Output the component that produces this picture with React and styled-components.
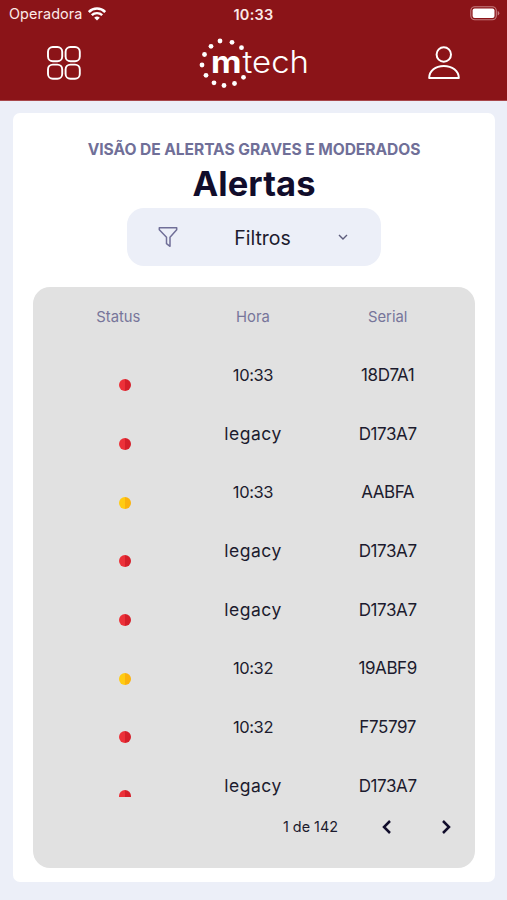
import React from 'react';
import styled, { createGlobalStyle } from 'styled-components';

const GlobalStyle = createGlobalStyle`
	* {
		box-sizing: border-box;
	}
	body {
		margin: 0;
		background-color: #eceff8;
		font-family: 'Inter', 'Liberation Sans', sans-serif;
		color: #1c1b2e;
	}
`;

const Screen = styled.div`
	width: 507px;
	height: 900px;
	overflow: hidden;
	background-color: #eceff8;
`;

const Header = styled.header`
	height: 101px;
	background-color: #8b1418;
	border-bottom: 1px solid #a8474b;
	color: #fbe9e7;
`;

const StatusBar = styled.div`
	height: 28px;
	padding: 0 7px 0 9px;
	display: grid;
	grid-template-columns: 1fr auto 1fr;
	align-items: center;
`;

const Carrier = styled.div`
	display: flex;
	align-items: center;
	gap: 5px;
	font-size: 14.4px;
	letter-spacing: 0.1px;
	line-height: 20px;
`;

const Clock = styled.div`
	margin-left: -2px;
	font-size: 14.5px;
	font-weight: 600;
	letter-spacing: 0.25px;
`;

const Battery = styled.svg`
	justify-self: end;
	margin-top: -2px;
`;

const NavBar = styled.nav`
	height: 70px;
	padding: 0 47px;
	display: flex;
	align-items: center;
	justify-content: space-between;
`;

const Card = styled.main`
	width: 482px;
	height: 769px;
	margin: 12px 0 0 13px;
	padding: 26px 20px 0;
	border-radius: 7px;
	background-color: #fff;
	display: flex;
	flex-direction: column;
	align-items: center;
`;

const Subtitle = styled.div`
	height: 20px;
	line-height: 21px;
	font-size: 15.6px;
	font-weight: 700;
	letter-spacing: -0.06px;
	white-space: nowrap;
	color: #706f98;
`;

const Title = styled.h1`
	height: 49px;
	margin: 0;
	line-height: 50px;
	font-size: 34.5px;
	font-weight: 700;
	letter-spacing: 0.1px;
	color: #110d2b;
`;

const Filter = styled.button`
	width: 254px;
	height: 58px;
	padding: 0 32px 0 30px;
	border: none;
	border-radius: 17px;
	background-color: #eceff8;
	display: flex;
	align-items: center;
	justify-content: space-between;
	font-family: inherit;
	font-size: 19.5px;
	color: #1c1b2e;
`;

const FilterLabel = styled.span`
	padding: 1px 0 0 9px;
`;

const Panel = styled.section`
	width: 442px;
	height: 581px;
	margin-top: 21px;
	border-radius: 17px;
	background-color: #e1e1e1;
`;

const Row = styled.div`
	height: 58.67px;
	padding: 0 20px 0 18px;
	display: grid;
	grid-template-columns: repeat(3, 1fr);
	align-items: center;
	justify-items: center;
	font-size: 16.5px;
`;

const HeadRow = styled(Row)`
	padding-top: 1px;
	font-size: 14.8px;
	color: #77759a;
`;

const Rows = styled.div`
	height: 451px;
	overflow: hidden;
`;

const Cell = styled.span`
	font-size: ${(props) => props.$size || 'inherit'};
	letter-spacing: ${(props) => props.$spacing || 0}px;
`;

const Dot = styled.span`
	width: 12px;
	height: 12px;
	margin: 21px 0 0 13px;
	border-radius: 50%;
	background: ${(props) =>
		props.$level === 'grave'
			? 'linear-gradient(90deg, #ec3139 50%, #d51f2a 50%)'
			: 'linear-gradient(90deg, #ffcb12 50%, #fbb20c 50%)'};
`;

const Pagination = styled.div`
	height: 60px;
	padding-right: 20px;
	display: flex;
	align-items: center;
	justify-content: flex-end;
	font-size: 14.4px;
`;

const PageInfo = styled.span`
	margin-right: 40px;
`;

const PageButton = styled.button`
	width: 18px;
	height: 24px;
	margin-left: ${(props) => props.$gap || 0}px;
	padding: 0;
	border: none;
	background: none;
	display: flex;
	align-items: center;
	justify-content: center;
	color: #110d2b;
`;

const logoDots = [
	[21, 4],
	[33, 5.3],
	[42.5, 10.7],
	[12, 9.3],
	[5.5, 17.5],
	[3, 28],
	[7, 38.3],
	[15, 45.8],
	[25, 48.5],
	[35.5, 46.5],
	[44.5, 40.3],
];

const alerts = [
	{ level: 'grave', time: '10:33', serial: '18D7A1' },
	{ level: 'grave', time: 'legacy', serial: 'D173A7' },
	{ level: 'moderado', time: '10:33', serial: 'AABFA' },
	{ level: 'grave', time: 'legacy', serial: 'D173A7' },
	{ level: 'grave', time: 'legacy', serial: 'D173A7' },
	{ level: 'moderado', time: '10:32', serial: '19ABF9' },
	{ level: 'grave', time: '10:32', serial: 'F75797' },
	{ level: 'grave', time: 'legacy', serial: 'D173A7' },
];

const WifiIcon = () => (
	<svg width='18' height='14' viewBox='0 0 18 14' fill='none' stroke='#fff'>
		<path d='M.8 5C5.3 .4 12.7 .4 17.2 5' strokeWidth='2.6' />
		<path d='M3.8 8.2C6.6 5.4 11.4 5.4 14.2 8.2' strokeWidth='2.4' />
		<path d='M6.2 10.7Q9 8.2 11.8 10.7L9 13.5Z' fill='#fff' stroke='none' />
	</svg>
);

const GridIcon = () => (
	<svg width='34' height='34' viewBox='0 0 34 34' fill='none' stroke='#fff' strokeWidth='1.9'>
		<rect x='1' y='1' width='14.2' height='14.2' rx='4.8' />
		<rect x='18.6' y='1' width='14.2' height='14.2' rx='4.8' />
		<rect x='1' y='18.6' width='14.2' height='14.2' rx='4.8' />
		<rect x='18.6' y='18.6' width='14.2' height='14.2' rx='4.8' />
	</svg>
);

const Logo = () => (
	<svg width='112' height='52' viewBox='0 0 112 52' fill='#fff'>
		{logoDots.map(([x, y]) => (
			<circle key={`${x}-${y}`} cx={x} cy={y} r='2.4' />
		))}
		<text x='12' y='35.5' fontFamily='Inter' fontSize='31' fontWeight='700' textLength='30.5' lengthAdjust='spacingAndGlyphs'>
			m
		</text>
		<text x='43.5' y='35.5' fontFamily='Inter' fontSize='31' fontWeight='300' textLength='66.5' lengthAdjust='spacingAndGlyphs'>
			tech
		</text>
	</svg>
);

const UserIcon = () => (
	<svg width='32' height='34' viewBox='0 0 32 34' fill='none' stroke='#fff' strokeWidth='2'>
		<circle cx='15.8' cy='8.5' r='7.2' />
		<path d='M1.2 32C1.2 24.8 7.5 19.9 15.8 19.9S30.8 24.8 30.8 32Z' strokeLinejoin='round' />
	</svg>
);

const FunnelIcon = () => (
	<svg width='22' height='22' viewBox='0 0 22 22' fill='none' stroke='#706f98' strokeWidth='1.5' strokeLinejoin='round'>
		<path d='M2.3 1.8H19.7V3.8L13 11.2V20.3L9.5 17.7V11.2L2.3 3.8Z' />
	</svg>
);

const App = () => {
	return (
		<Screen>
			<GlobalStyle />
			<Header>
				<StatusBar>
					<Carrier>
						Operadora
						<WifiIcon />
					</Carrier>
					<Clock>10:33</Clock>
					<Battery width='30' height='15' viewBox='0 0 30 15'>
						<rect x='.8' y='.8' width='25.5' height='13' rx='4' fill='none' stroke='#c57c7f' strokeWidth='1.1' />
						<rect x='2.6' y='2.6' width='21.9' height='9.4' rx='2' fill='#fff' />
						<path d='M27.7 5V9.6Q29.3 9 29.3 7.3T27.7 5Z' fill='#c57c7f' />
					</Battery>
				</StatusBar>
				<NavBar>
					<GridIcon />
					<Logo />
					<UserIcon />
				</NavBar>
			</Header>
			<Card>
				<Subtitle>VISÃO DE ALERTAS GRAVES E MODERADOS</Subtitle>
				<Title>Alertas</Title>
				<Filter>
					<FunnelIcon />
					<FilterLabel>Filtros</FilterLabel>
					<svg width='12' height='8' viewBox='0 0 12 8' fill='none' stroke='#5d5c7c' strokeWidth='1.4'>
						<path d='M2 2L6 6L10 2' />
					</svg>
				</Filter>
				<Panel>
					<HeadRow>
						<Cell>Status</Cell>
						<Cell>Hora</Cell>
						<Cell>Serial</Cell>
					</HeadRow>
					<Rows>
						{alerts.map((alert, i) => (
							<Row key={i}>
								<Dot $level={alert.level} />
								{alert.time === 'legacy' ? (
									<Cell $size='17.5px' $spacing={0.5}>{alert.time}</Cell>
								) : (
									<Cell $spacing={-0.4}>{alert.time}</Cell>
								)}
								<Cell $size='17px' $spacing={-0.4}>{alert.serial}</Cell>
							</Row>
						))}
					</Rows>
					<Pagination>
						<PageInfo>1 de 142</PageInfo>
						<PageButton>
							<svg width='10' height='16' viewBox='0 0 10 16' fill='none' stroke='currentColor' strokeWidth='2.5'>
								<path d='M8 2L2 8L8 14' />
							</svg>
						</PageButton>
						<PageButton $gap={41}>
							<svg width='10' height='16' viewBox='0 0 10 16' fill='none' stroke='currentColor' strokeWidth='2.5'>
								<path d='M2 2L8 8L2 14' />
							</svg>
						</PageButton>
					</Pagination>
				</Panel>
			</Card>
		</Screen>
	);
};

export default App;
